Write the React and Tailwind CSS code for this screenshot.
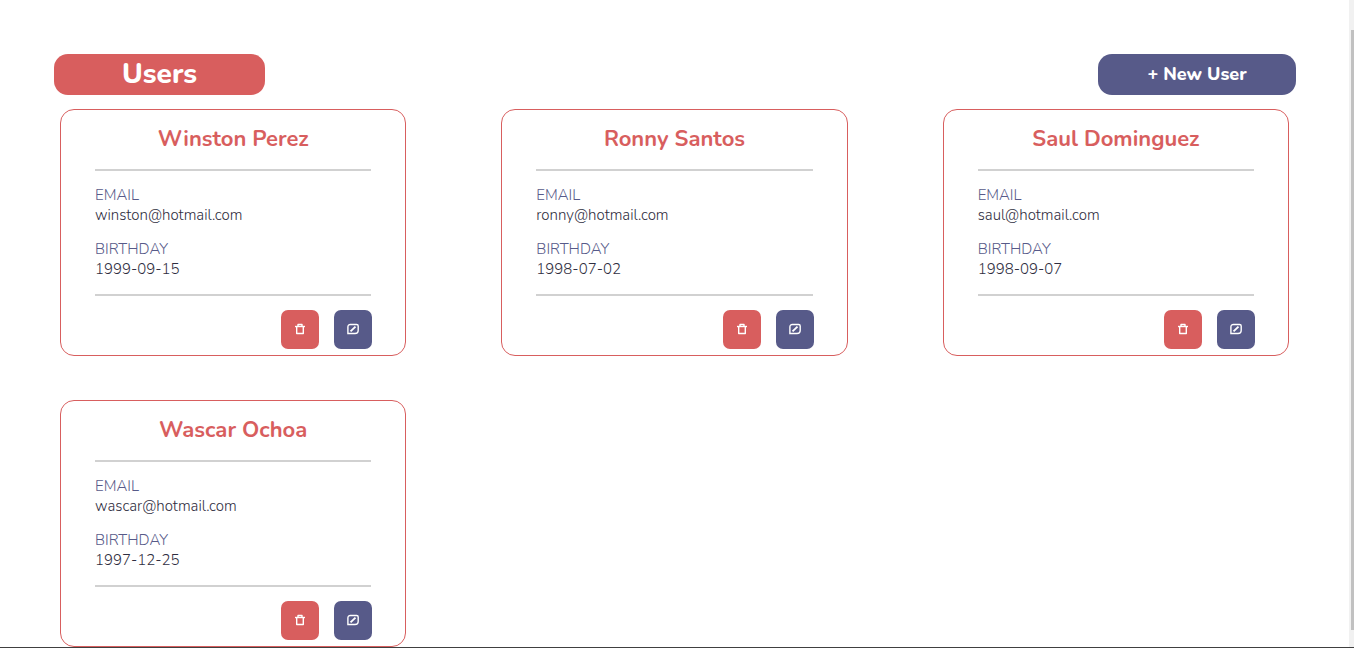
const users = [
  { name: 'Winston Perez', email: 'winston@hotmail.com', birthday: '1999-09-15' },
  { name: 'Ronny Santos', email: 'ronny@hotmail.com', birthday: '1998-07-02' },
  { name: 'Saul Dominguez', email: 'saul@hotmail.com', birthday: '1998-09-07' },
  { name: 'Wascar Ochoa', email: 'wascar@hotmail.com', birthday: '1997-12-25' },
];

function TrashIcon() {
  return (
    <svg className="h-3 w-3" viewBox="0 0 12 12" fill="none" stroke="currentColor" strokeWidth="1.4" aria-hidden="true">
      <path d="M1 3.5h10" />
      <path d="M2.7 3.5v7h6.6v-7" strokeLinejoin="round" />
      <path d="M4 3.2V1.5h4v1.7" strokeLinejoin="round" />
    </svg>
  );
}

function EditIcon() {
  return (
    <svg className="h-3 w-3" viewBox="0 0 12 12" fill="none" stroke="currentColor" strokeWidth="1.4" aria-hidden="true">
      <path d="M3.4 1.5h6.2q1.6 0 1.6 1.6v4.2q0 3.2-3.2 3.2H.9V4q0-2.5 2.5-2.5z" />
      <path d="M3.5 8.4l5-4.8" strokeWidth="1.9" />
    </svg>
  );
}

function UserCard({ user }) {
  return (
    <article className="rounded-[14px] border border-[#d85e5e] px-[34px] pt-[15px] pb-[6px]">
      <h2 className="text-center text-[22px] leading-7 font-bold text-[#d85e5e]">{user.name}</h2>
      <hr className="mt-4 border-t-2 border-[#d1d1d1]" />
      <dl className="mt-[14px] text-[15px] leading-5 font-light">
        <dt className="text-[#575a89]">EMAIL</dt>
        <dd className="text-[#2f2e41]">{user.email}</dd>
        <dt className="mt-[14px] text-[#575a89]">BIRTHDAY</dt>
        <dd className="text-[#2f2e41]">{user.birthday}</dd>
      </dl>
      <hr className="mt-[15px] border-t-2 border-[#d1d1d1]" />
      <div className="mt-[14px] -mr-px flex justify-end gap-[15px]">
        <button type="button" aria-label={`Delete ${user.name}`} className="flex h-[39px] w-[38px] items-center justify-center rounded-[7px] bg-[#d85e5e] pb-[2px] text-white">
          <TrashIcon />
        </button>
        <button type="button" aria-label={`Edit ${user.name}`} className="flex h-[39px] w-[38px] items-center justify-center rounded-[7px] bg-[#575a89] pb-[2px] text-white">
          <EditIcon />
        </button>
      </div>
    </article>
  );
}

export default function App() {
  return (
    <div className="flex min-h-screen border-b border-[#404040] bg-white font-['Nunito','Open_Sans',sans-serif]">
      <main className="min-w-0 flex-1 pt-[54px] pr-[53px] pl-[54px]">
        <header className="flex justify-between">
          <h1 className="w-[211px] rounded-[14px] bg-[#d85e5e] text-center text-[28px] leading-[41px] font-extrabold text-white">Users</h1>
          <button type="button" className="w-[198px] rounded-[14px] bg-[#575a89] text-[18px] leading-[41px] font-extrabold text-white">+ New User</button>
        </header>
        <section className="mt-[14px] grid grid-cols-3 gap-x-[95px] gap-y-11 pr-[7px] pl-[6px]">
          {users.map((user) => (
            <UserCard key={user.email} user={user} />
          ))}
        </section>
      </main>
      <div className="flex w-[5px] flex-col bg-[#f1f1f1] pt-[30px] pb-[17px] pl-[2px]" aria-hidden="true">
        <div className="flex-1 bg-[#c1c1c1]" />
      </div>
    </div>
  );
}
